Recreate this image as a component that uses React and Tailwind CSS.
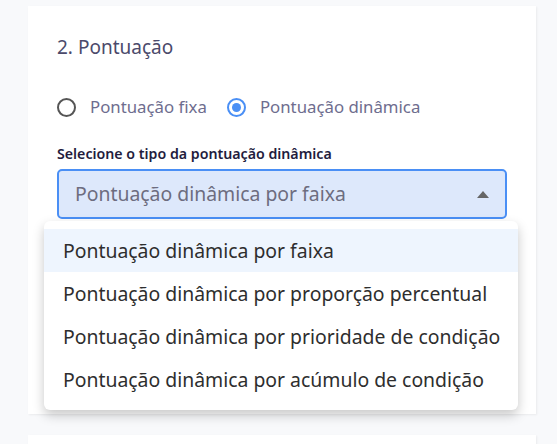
import React from "react";

const options = [
  "Pontuação dinâmica por faixa",
  "Pontuação dinâmica por proporção percentual",
  "Pontuação dinâmica por prioridade de condição",
  "Pontuação dinâmica por acúmulo de condição",
];

export default function App() {
  return (
    <div
      className="relative w-[557px] h-[444px] overflow-hidden bg-[#f8f9fb]"
      style={{ fontFamily: '"Noto Sans", "Open Sans", sans-serif' }}
    >
      <div className="ml-[28px] mt-[6px] w-[508px] h-[408px] bg-white shadow-[1px_1px_2px_rgba(0,0,0,0.06)] pl-[29px] pr-[29px] pt-[28px]">
        <h2 className="text-[19px] leading-[26px] text-[#4b4a6b]">2. Pontuação</h2>
        <div className="mt-[35px] flex items-center h-[24px]">
          <span className="w-[19px] h-[19px] rounded-full border-2 border-[#555] bg-white" />
          <span className="ml-[14px] text-[16.8px] text-[#6e6d8e]">Pontuação fixa</span>
          <span className="ml-[20px] w-[19px] h-[19px] rounded-full border-2 border-[#4a8ff5] bg-white flex items-center justify-center">
            <span className="w-[9px] h-[9px] rounded-full bg-[#4a8ff5]" />
          </span>
          <span className="ml-[14px] text-[16.8px] text-[#6e6d8e]">Pontuação dinâmica</span>
        </div>
        <div className="mt-[25px] text-[14.2px] font-semibold leading-[20px] text-[#231c3d]">
          Selecione o tipo da pontuação dinâmica
        </div>
        <div className="mt-[5px] h-[50px] rounded-[5px] border-2 border-[#4a8ff5] bg-[#dde8fb] flex items-center pl-[16px] pr-[16px]">
          <span className="flex-1 text-[19.4px] text-[#6d6d7f]">Pontuação dinâmica por faixa</span>
          <svg width="12" height="7" viewBox="0 0 12 7">
            <path d="M0 7 L6 0 L12 7 Z" fill="#666" />
          </svg>
        </div>
      </div>
      <div className="ml-[28px] mt-[21px] w-[508px] h-[40px] bg-white shadow-[1px_1px_2px_rgba(0,0,0,0.06)]" />

      <div className="absolute left-[44px] top-[221px] w-[474px] h-[189px] bg-white rounded-[6px] shadow-[0_5px_12px_rgba(0,0,0,0.22)] py-[8px]">
        {options.map((o, i) => (
          <div
            key={o}
            className={
              "h-[43px] flex items-center pl-[19px] text-[19.4px] text-[#2e2e2e] " +
              (i === 0 ? "bg-[#eef5fe]" : "")
            }
          >
            {o}
          </div>
        ))}
      </div>
    </div>
  );
}
